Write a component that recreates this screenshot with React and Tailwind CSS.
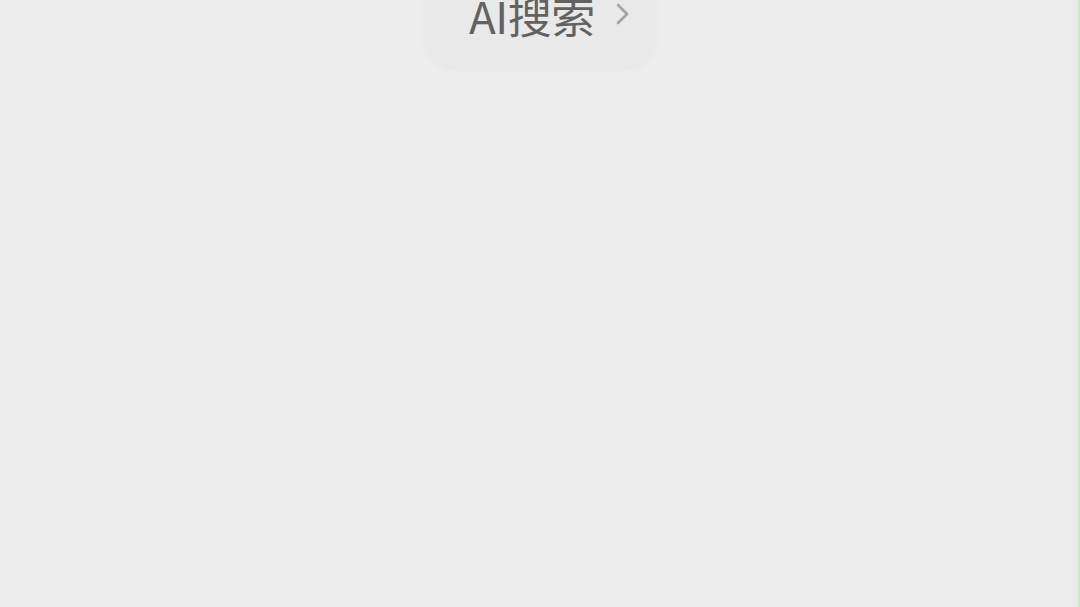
export default function App() {
  return (
    <div className="relative w-[1080px] h-[607px] overflow-hidden bg-[#eeeded]" style={{ fontFamily: '"Noto Sans", "Noto Sans CJK SC", sans-serif' }}>
      <div className="flex justify-center">
        <div className="mt-[-32px] h-[100px] w-[232px] rounded-[32px] bg-[#e9e9e9] shadow-[0_2px_6px_rgba(0,0,0,0.03)] flex items-end pb-[31px] pl-[45px] gap-[20px]">
          <span className="text-[44px] leading-none text-[#626262] tracking-[-0.5px]" style={{ fontFamily: '"Noto Sans CJK SC", sans-serif' }}>AI搜索</span>
          <svg width="16" height="22" viewBox="0 0 16 22" className="mb-[12px]" fill="none">
            <path d="M3 2 L12 11 L3 20" stroke="#a3a3a3" strokeWidth="2.6" strokeLinecap="round" strokeLinejoin="round" />
          </svg>
        </div>
      </div>
      <div className="absolute right-0 top-0 h-full w-[8px] flex">
        <div className="w-[6px] h-full bg-[#e9ebe9]" />
        <div className="w-[2px] h-full bg-[#cbe9c9]" />
      </div>
    </div>
  );
}
